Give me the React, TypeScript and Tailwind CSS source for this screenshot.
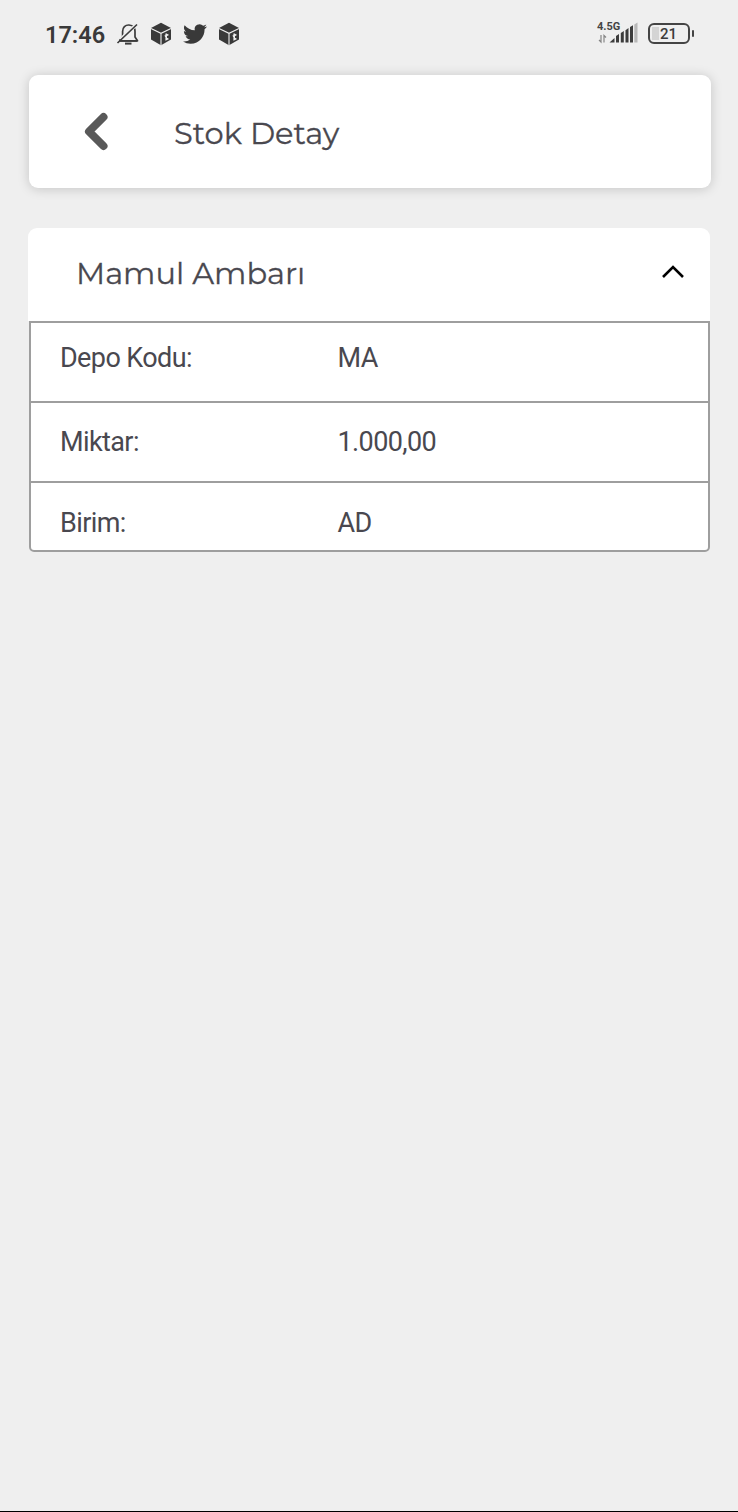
import React from "react"

const details = [
  { label: "Depo Kodu:", value: "MA", row: "h-[80px] border-b-2 pb-[9px]" },
  { label: "Miktar:", value: "1.000,00", row: "h-[80px] border-b-2" },
  { label: "Birim:", value: "AD", row: "h-[67px] pt-[13px]" },
]

const MutedBell = () => (
  <svg className="w-6 h-6" viewBox="0 0 24 24" fill="none" stroke="#3c3c3c" strokeWidth="1.7">
    <path d="M3.5 18.8H21.5L19 15V9.5C19 6 16.8 3.3 13 3C9.3 2.8 6.6 5.6 6.6 9.5V14.5L3.5 18.8" strokeLinejoin="round" />
    <path d="M4.5 17.5L20.5 2.5" stroke="#efefef" strokeWidth="3.5" />
    <path d="M1.5 21L21 2.5M3 18.8H21" />
    <path d="M9 21.6H15.5" strokeWidth="2" />
  </svg>
)

const BoxIcon = () => (
  <svg className="w-[22px] h-6" viewBox="0 0 22 24">
    <path d="M11 .8L21 6.1V17.6L11 23.2L1 17.6V6.1Z" fill="#393939" />
    <path d="M1 6.6L11 11.3L21 6.6M11 11.3V23.2" fill="none" stroke="#efefef" strokeWidth="1.1" />
    <path d="M16.2 11.6V17.6L18.4 16.6M14.8 14.2L18.4 12.6" fill="none" stroke="#efefef" strokeWidth="1.6" />
  </svg>
)

const TwitterIcon = () => (
  <svg className="w-6 h-6" viewBox="0 0 24 24" fill="#393939">
    <path d="M23.953 4.57a10 10 0 01-2.825.775 4.958 4.958 0 002.163-2.723c-.951.555-2.005.959-3.127 1.184a4.92 4.92 0 00-8.384 4.482C7.69 8.095 4.067 6.13 1.64 3.162a4.822 4.822 0 00-.666 2.475c0 1.71.87 3.213 2.188 4.096a4.904 4.904 0 01-2.228-.616v.06a4.923 4.923 0 003.946 4.827 4.996 4.996 0 01-2.212.085 4.936 4.936 0 004.604 3.417 9.867 9.867 0 01-6.102 2.105c-.39 0-.779-.023-1.17-.067a13.995 13.995 0 007.557 2.209c9.053 0 13.998-7.496 13.998-13.985 0-.21 0-.42-.015-.63A9.935 9.935 0 0024 4.59z" />
  </svg>
)

const Signal = () => (
  <div className="w-[42px]">
    <div className="h-[9px] text-[11px] leading-[9px] font-bold text-[#444]">4.5G</div>
    <svg className="-mt-[9px] w-[42px] h-[22px]" viewBox="0 0 42 22">
      <path d="M4 13V20L2 18M7 20.5V13.5L9 15.5" fill="none" stroke="#858585" strokeWidth="1.2" />
      <path d="M12.5 20.5L17.5 16V20.5ZM19 14L22 12V20.5H19ZM23.8 11L26.8 9V20.5H23.8ZM28.5 8.2L31.5 6V20.5H28.5ZM33 5L36 3.2V20.5H33Z" fill="#3c3c3c" />
      <path d="M37.3 2.5L40.5 .5V20.5H37.3Z" fill="#b8b8b8" />
    </svg>
  </div>
)

const Battery = () => (
  <div className="flex items-center">
    <div className="flex w-[42px] h-[21px] rounded-[6px] border-2 border-[#444] p-[2px]">
      <div className="w-[7px] h-full bg-[#d4d4d4]" />
      <span className="ml-px text-[15px] leading-[14px] font-medium text-[#3c3c3c]">21</span>
    </div>
    <div className="ml-[1.5px] w-[2.5px] h-[7px] rounded bg-[#444]" />
  </div>
)

const StatusBar = () => (
  <div className="flex h-[75px] items-start justify-between pl-[45px] pr-[44px] pt-[22px]">
    <div className="flex h-6 items-center">
      <span className="w-[71px] pt-px text-[23.5px] leading-6 font-semibold text-[#393939]">17:46</span>
      <MutedBell />
      <div className="ml-[10px] flex items-center gap-[11px]">
        <BoxIcon />
        <TwitterIcon />
        <BoxIcon />
      </div>
    </div>
    <div className="flex items-start gap-[9px]">
      <Signal />
      <div className="pt-px">
        <Battery />
      </div>
    </div>
  </div>
)

const App = () => {
  return (
    <div className="flex flex-col h-[1512px] w-[738px] overflow-hidden border-b border-black bg-[#efefef] font-['Roboto',sans-serif] text-[#49484f]">
      <StatusBar />

      <header className="ml-[29px] flex h-[113px] w-[682px] shrink-0 items-center rounded-[9px] bg-white pl-[54px] shadow-[0_1px_12px_rgba(0,0,0,0.18)]">
        <svg className="w-[26px] h-[40px]" viewBox="0 0 26 40" fill="none" stroke="#595959" strokeWidth="8" strokeLinecap="round" strokeLinejoin="round">
          <path d="M20.5 5L6 19.5L20.5 34" />
        </svg>
        <h1 className="ml-[65px] pt-[2px] font-['Montserrat','Inter',sans-serif] text-[30.5px] leading-[40px] [-webkit-text-stroke:0.3px]">
          Stok Detay
        </h1>
      </header>

      {/* Warehouse accordion */}
      <section className="mx-auto mt-[39.5px] w-[682px]">
        <div className="flex h-[93.5px] items-center justify-between rounded-t-[9px] bg-white pl-[48px] pr-[25px]">
          <h2 className="pb-[2px] font-['Montserrat','Inter',sans-serif] text-[30.5px] leading-[40px] [-webkit-text-stroke:0.3px]">
            Mamul Ambarı
          </h2>
          <svg className="mb-[4px] w-6 h-4" viewBox="0 0 24 16" fill="none" stroke="#000" strokeWidth="2.6">
            <path d="M2 13L12 3L22 13" />
          </svg>
        </div>
        <div className="ml-px w-[681px] rounded-b-[5px] border-2 border-[#9e9e9e] bg-white">
          {details.map((item) => (
            <div
              key={item.label}
              className={`flex items-center border-[#9e9e9e] pl-[29px] text-[27px] leading-8 tracking-[-0.6px] ${item.row}`}
            >
              <span className="w-[277.5px]">{item.label}</span>
              <span>{item.value}</span>
            </div>
          ))}
        </div>
      </section>
    </div>
  )
}

export default App
